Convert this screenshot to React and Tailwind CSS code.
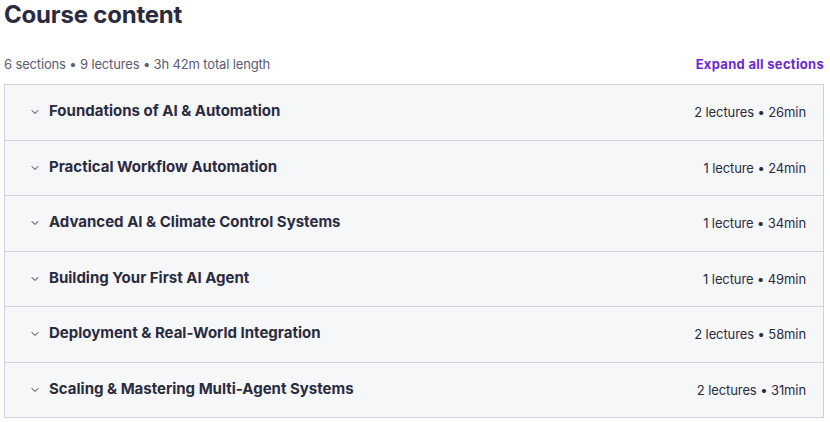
import { ChevronDown } from "lucide-react";

const sections = [
  { title: "Foundations of AI & Automation", meta: "2 lectures • 26min" },
  { title: "Practical Workflow Automation", meta: "1 lecture • 24min" },
  { title: "Advanced AI & Climate Control Systems", meta: "1 lecture • 34min" },
  { title: "Building Your First AI Agent", meta: "1 lecture • 49min" },
  { title: "Deployment & Real-World Integration", meta: "2 lectures • 58min" },
  { title: "Scaling & Mastering Multi-Agent Systems", meta: "2 lectures • 31min" },
];

function App() {
  return (
    <div className="w-[830px] bg-white px-[4px] pr-[6px] font-['Inter','Noto_Sans',sans-serif] text-[#2a2b3f]">
      <h1 className="pt-[1px] text-[24px] font-bold leading-[28px] tracking-[-0.2px]">Course content</h1>

      <div className="mt-[25px] flex items-center justify-between">
        <p className="text-[13px] leading-[20px] tracking-[-0.15px] text-[#595c73]">
          6 sections • 9 lectures • 3h 42m total length
        </p>
        <button className="text-[13px] font-bold leading-[20px] tracking-[0.3px] text-[#6d28d2]">
          Expand all sections
        </button>
      </div>

      <div className="mt-[10px] border border-[#d1d2e0]">
        {sections.map((section, index) => (
          <div
            key={index}
            className="flex h-[55.5px] items-center justify-between border-b border-[#d1d2e0] bg-[#f6f7f9] pl-[24px] pr-[17px] last:h-[54.5px] last:border-b-0"
          >
            <div className="mb-[2px] flex items-center gap-[8px]">
              <ChevronDown size={12} strokeWidth={2} className="mt-[2px] text-[#2a2b3f]" />
              <span className="text-[15px] font-bold leading-[20px]">{section.title}</span>
            </div>
            <span className="text-[13px] leading-[20px] tracking-[-0.1px] text-[#2a2b3f]">{section.meta}</span>
          </div>
        ))}
      </div>
    </div>
  );
}

export default App;
